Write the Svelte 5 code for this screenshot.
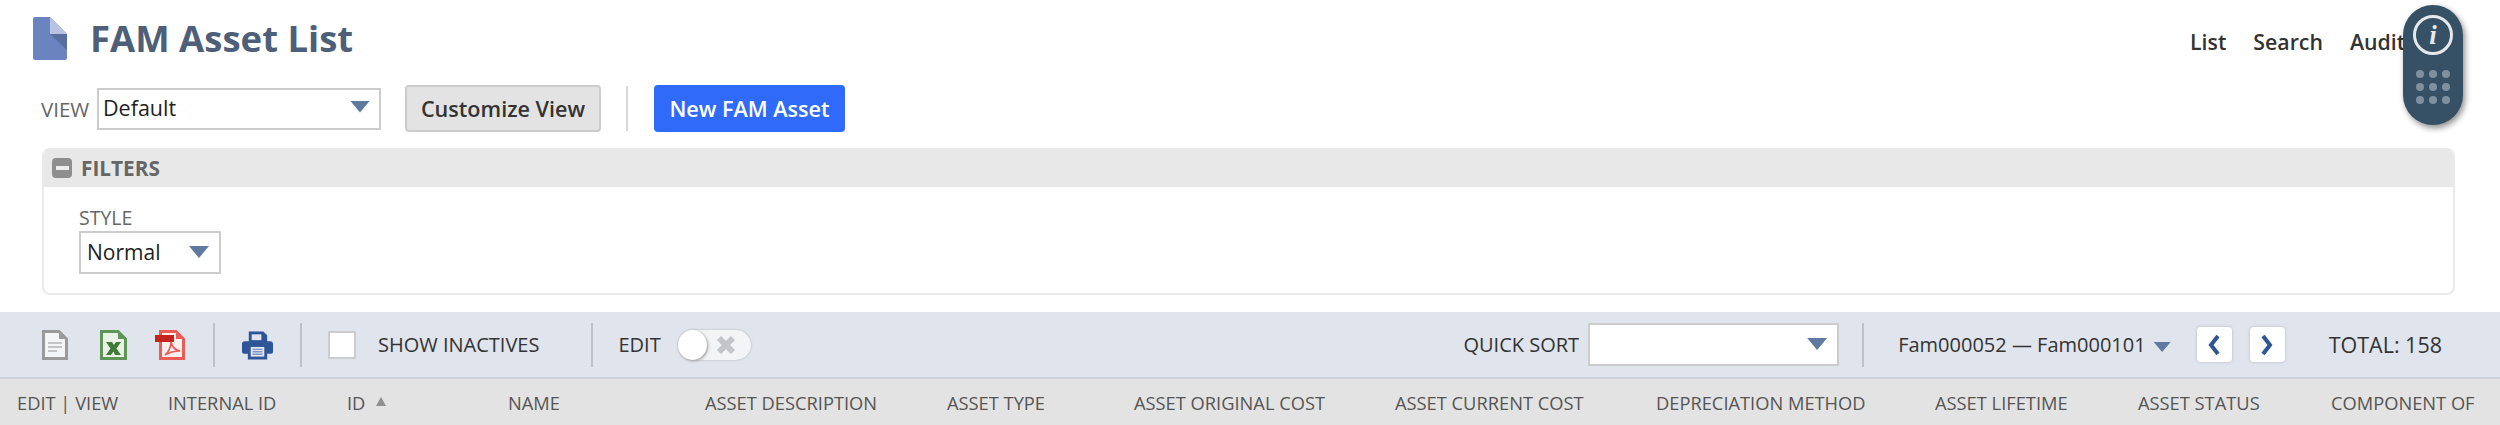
<script>
  const columns = [
    { label: "EDIT | VIEW" },
    { label: "INTERNAL ID" },
    { label: "ID", sorted: true },
    { label: "NAME" },
    { label: "ASSET DESCRIPTION" },
    { label: "ASSET TYPE" },
    { label: "ASSET ORIGINAL COST" },
    { label: "ASSET CURRENT COST" },
    { label: "DEPRECIATION METHOD" },
    { label: "ASSET LIFETIME" },
    { label: "ASSET STATUS" },
    { label: "COMPONENT OF" },
  ];
  const navLinks = ["List", "Search", "Audit"];
  const dots = [...Array(9).keys()];
</script>

<div class="page">
  <header class="title-row">
    <svg class="page-icon" width="34" height="43" viewBox="0 0 34 43">
      <path d="M2 0H17L34 17V41a2 2 0 0 1-2 2H2a2 2 0 0 1-2-2V2a2 2 0 0 1 2-2z" fill="#6b84bf" />
      <path d="M17 17H34V33z" fill="#566f9f" />
      <path d="M17 0L34 17H17z" fill="#b7c3e0" />
    </svg>
    <h1>FAM Asset List</h1>
    <nav>
      {#each navLinks as link}
        <span>{link}</span>
      {/each}
    </nav>
  </header>

  <div class="view-row">
    <span class="field-label">VIEW</span>
    <div class="select view-select">
      <span>Default</span>
      <i class="caret"></i>
    </div>
    <button class="btn">Customize View</button>
    <span class="divider"></span>
    <button class="btn primary">New FAM Asset</button>
  </div>

  <section class="filters">
    <div class="filters-head">
      <span class="minus"><b></b></span>
      <span>FILTERS</span>
    </div>
    <div class="filters-body">
      <div class="style-label">STYLE</div>
      <div class="select style-select">
        <span>Normal</span>
        <i class="caret"></i>
      </div>
    </div>
  </section>

  <div class="toolbar">
    <div class="icons">
      <svg width="26" height="30" viewBox="0 0 26 30">
        <path d="M1.5 1.5H17L24.5 9V28.5H1.5z" fill="#f4f5f6" stroke="#9a9a9a" stroke-width="3" />
        <path d="M17 1V9H25z" fill="#9a9a9a" />
        <path d="M6 13H20M6 17H20M6 21H15" stroke="#c4c4c4" stroke-width="2" />
      </svg>
      <svg class="xls" width="27" height="30" viewBox="0 0 27 30">
        <path d="M1.5 1.5H18L25.5 9V28.5H1.5z" fill="#eaf1e6" stroke="#5f9557" stroke-width="3" />
        <path d="M18 1V9H26z" fill="#5f9557" />
        <path d="M6 12H12L14 15L16 12H21L16.5 18.5L21 25H15L13.5 21.5L11 25H6L10.5 18.5z" fill="#3f7a36" />
      </svg>
      <svg width="30" height="30" viewBox="0 0 30 30">
        <path d="M5.5 1.5H21L28.5 9V28.5H5.5z" fill="#fbeeed" stroke="#ec5c55" stroke-width="3" />
        <path d="M21 1V9H29z" fill="#ec5c55" />
        <path d="M0 5H19V12H0z" fill="#c4241d" />
        <path d="M10 25C14 22 16 16 16 12C17 17 20 20 25 21C20 21 15 22 10 25z" fill="none" stroke="#ec5c55" stroke-width="1.6" />
      </svg>
      <span class="sep"></span>
      <svg class="printer" width="31" height="30" viewBox="0 0 32 30">
        <path d="M7 1H22L26 5V12H7z" fill="#2f5597" />
        <path d="M10 4H20V10H10z" fill="#dfe4ed" />
        <path d="M3 11H29a3 3 0 0 1 3 3V22a2 2 0 0 1-2 2H26V30H6V24H2a2 2 0 0 1-2-2V14a3 3 0 0 1 3-3z" fill="#2f5597" />
        <path d="M9 17H23V27H9z" fill="#dfe4ed" />
        <path d="M11 19.5H21M11 22H21M11 24.5H21" stroke="#7d97c4" stroke-width="1.4" />
      </svg>
      <span class="sep last"></span>
    </div>
    <span class="checkbox"></span>
    <span class="check-label">SHOW INACTIVES</span>
    <span class="sep edit-sep"></span>
    <span class="edit-label">EDIT</span>
    <span class="toggle">
      <span class="knob"></span>
      <svg width="22" height="20" viewBox="0 0 22 20">
        <path d="M4 3L18 17M18 3L4 17" stroke="#c3c5c8" stroke-width="6" />
      </svg>
    </span>

    <span class="quick-label">QUICK SORT</span>
    <div class="select sort-select"><i class="caret"></i></div>
    <span class="sep range-sep"></span>
    <span class="range">Fam000052 — Fam000101</span>
    <i class="caret small"></i>
    <button class="page-btn prev" aria-label="Previous">
      <svg width="14" height="22" viewBox="0 0 14 22"><path d="M11 2L4 11L11 20" fill="none" stroke="#2f5597" stroke-width="4" /></svg>
    </button>
    <button class="page-btn" aria-label="Next">
      <svg width="14" height="22" viewBox="0 0 14 22"><path d="M3 2L10 11L3 20" fill="none" stroke="#2f5597" stroke-width="4" /></svg>
    </button>
    <span class="total">TOTAL: 158</span>
  </div>

  <div class="table-head">
    {#each columns as col}
      <div class="th">
        {col.label}
        {#if col.sorted}
          <svg class="sort" width="10" height="9" viewBox="0 0 10 9"><path d="M5 0L10 9H0z" fill="#8f8f8f" /></svg>
        {/if}
      </div>
    {/each}
  </div>

  <aside class="help-pill">
    <span class="info">i</span>
    <div class="dots">
      {#each dots as d (d)}
        <span></span>
      {/each}
    </div>
  </aside>
</div>

<style>
  :global(body) {
    margin: 0;
    background: #fff;
  }
  .page {
    position: relative;
    width: 2500px;
    height: 425px;
    overflow: hidden;
    font-family: "Open Sans", sans-serif;
    font-size: 20px;
    color: #333;
  }
  .title-row {
    display: flex;
    align-items: center;
    height: 43px;
    padding: 17px 0 0 33px;
  }
  h1 {
    margin: 0 0 0 23px;
    font-size: 36.5px;
    font-weight: 700;
    line-height: 43px;
    color: #4d5f79;
  }
  nav {
    display: flex;
    gap: 27px;
    margin: 6px 0 0 auto;
    width: 310px;
    font-weight: 600;
    font-size: 21.3px;
    color: #333;
  }
  .view-row {
    display: flex;
    align-items: center;
    height: 47px;
    margin-top: 25px;
    padding-left: 41px;
  }
  .field-label {
    width: 56px;
    color: #666;
    font-size: 20.5px;
  }
  .select {
    position: relative;
    display: flex;
    align-items: center;
    box-sizing: border-box;
    background: #fff;
    border: 2px solid #ccc;
    color: #222;
  }
  .caret {
    position: absolute;
    width: 20px;
    height: 12px;
    background: #5f7a9e;
    clip-path: polygon(0 0, 100% 0, 50% 100%);
  }
  .caret.small {
    position: static;
    width: 17px;
    height: 10px;
    margin: 5px 0 0 8px;
  }
  .view-select {
    width: 284px;
    height: 42px;
    padding-left: 4px;
    padding-bottom: 2px;
    font-size: 21.5px;
  }
  .view-select .caret {
    right: 9px;
    top: 11px;
  }
  .btn {
    box-sizing: border-box;
    height: 47px;
    margin-left: 24px;
    padding: 0;
    width: 196px;
    border: 2px solid #ccc;
    border-radius: 4px;
    background: #e3e3e3;
    font: 600 21.6px "Open Sans", sans-serif;
    color: #333;
  }
  .btn.primary {
    width: 191px;
    margin-left: 26px;
    border: none;
    background: #2f6bf8;
    color: #fff;
  }
  .divider {
    width: 2px;
    height: 45px;
    margin-left: 25px;
    background: #d8d8d8;
  }
  .filters {
    box-sizing: border-box;
    height: 147px;
    margin: 16px 45px 0 42px;
    border: 2px solid #eaeaea;
    border-top: none;
    border-radius: 8px;
    overflow: hidden;
  }
  .filters-head {
    display: flex;
    align-items: center;
    gap: 9px;
    height: 39px;
    margin: 0 -2px;
    padding-left: 10px;
    background: #e8e8e8;
    font-weight: 700;
    font-size: 20.8px;
    color: #666;
  }
  .minus {
    display: flex;
    align-items: center;
    justify-content: center;
    width: 20px;
    height: 20px;
    border-radius: 4px;
    background: #8e8e8e;
  }
  .minus b {
    width: 13px;
    height: 4px;
    background: #eee;
  }
  .filters-body {
    padding: 18px 0 0 35px;
  }
  .style-label {
    font-size: 19.5px;
    line-height: 26px;
    color: #666;
  }
  .style-select {
    width: 142px;
    height: 43px;
    padding-left: 6px;
    padding-bottom: 2px;
    font-size: 21px;
  }
  .style-select .caret {
    right: 10px;
    top: 13px;
  }
  .toolbar {
    display: flex;
    align-items: center;
    box-sizing: border-box;
    height: 67px;
    margin-top: 17px;
    border-bottom: 2px solid #d0d4da;
    background: #dfe4ed;
    font-size: 20px;
    color: #333;
  }
  .icons {
    display: flex;
    align-items: center;
    gap: 28px;
    margin-left: 42px;
  }
  .xls {
    margin-left: 4px;
  }
  .printer {
    margin-left: -1px;
  }
  .sep {
    width: 2px;
    height: 44px;
    background: #bcc2cb;
  }
  .sep.last {
    margin-left: -1px;
  }
  .checkbox {
    box-sizing: border-box;
    width: 28px;
    height: 28px;
    margin-left: 26px;
    background: #fff;
    border: 2px solid #ccc;
  }
  .check-label {
    margin-left: 22px;
  }
  .edit-sep {
    margin-left: 52px;
  }
  .edit-label {
    margin-left: 25px;
  }
  .toggle {
    position: relative;
    display: flex;
    align-items: center;
    justify-content: flex-end;
    box-sizing: border-box;
    width: 73px;
    height: 30px;
    margin-left: 17px;
    padding-right: 14px;
    border-radius: 15px;
    background: #f3f4f5;
    box-shadow: 0 0 2px #aaa;
  }
  .knob {
    position: absolute;
    left: 0;
    top: 0;
    width: 29px;
    height: 30px;
    border-radius: 50%;
    background: #fff;
    box-shadow: 1px 1px 3px #999;
  }
  .quick-label {
    margin-left: auto;
  }
  .sort-select {
    width: 251px;
    height: 43px;
    margin-left: 9px;
  }
  .sort-select .caret {
    right: 10px;
    top: 13px;
  }
  .range-sep {
    margin-left: 23px;
  }
  .range {
    margin-left: 34px;
  }
  .page-btn {
    display: flex;
    align-items: center;
    justify-content: center;
    box-sizing: border-box;
    width: 35px;
    height: 35px;
    margin-left: 18px;
    padding: 0;
    border: none;
    border-radius: 4px;
    background: #fff;
    box-shadow: 0 0 3px #b5b9c0;
  }
  .page-btn.prev {
    margin-left: 26px;
  }
  .total {
    margin: 0 58px 0 44px;
    font-size: 21.5px;
  }
  .table-head {
    display: grid;
    grid-template-columns: 151px 179px 161px 197px 242px 187px 261px 261px 279px 203px 193px 1fr;
    align-items: center;
    height: 46px;
    padding-left: 17px;
    background: #e3e3e3;
    font-size: 18.3px;
    color: #555;
  }
  .th {
    white-space: nowrap;
  }
  .sort {
    margin: 0 0 4px 6px;
  }
  .help-pill {
    position: absolute;
    left: 2403px;
    top: 5px;
    display: flex;
    flex-direction: column;
    align-items: center;
    width: 60px;
    height: 120px;
    border-radius: 30px;
    background: #365066;
    box-shadow: 2px 3px 6px rgba(0, 0, 0, 0.45);
  }
  .info {
    display: flex;
    align-items: center;
    justify-content: center;
    box-sizing: border-box;
    width: 40px;
    height: 40px;
    margin-top: 10px;
    border: 3px solid #e6e8ea;
    border-radius: 50%;
    font: italic 700 27px "Liberation Serif", serif;
    color: #e6e8ea;
  }
  .dots {
    display: grid;
    grid-template-columns: repeat(3, 8px);
    gap: 5px;
    margin-top: 15px;
  }
  .dots span {
    width: 8px;
    height: 8px;
    border-radius: 50%;
    background: #7f919f;
  }
</style>
